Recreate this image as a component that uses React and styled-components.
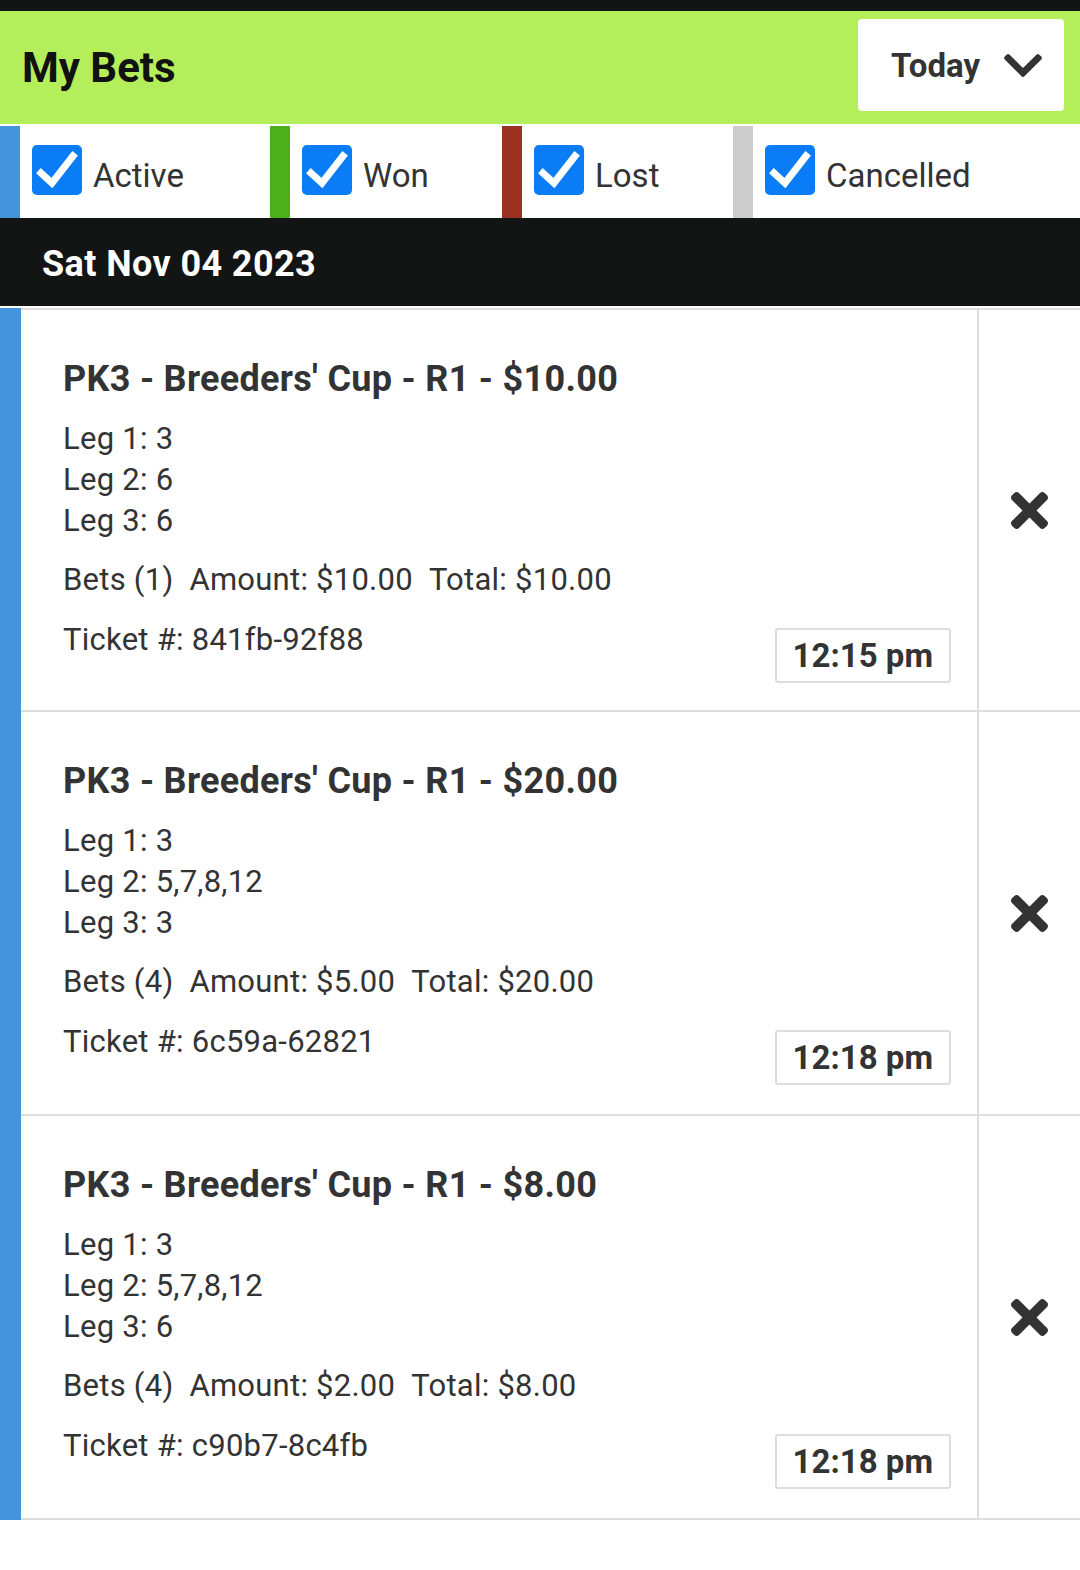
import React from 'react';
import styled, { createGlobalStyle } from 'styled-components';

const GlobalStyle = createGlobalStyle`
  html, body {
    margin: 0;
    padding: 0;
    background: #fff;
    font-family: Roboto, "Liberation Sans", Arial, sans-serif;
    color: #333;
  }
`;

const filters = [
  { label: 'Active', color: '#4494dd' },
  { label: 'Won', color: '#4cb01b' },
  { label: 'Lost', color: '#9b3322' },
  { label: 'Cancelled', color: '#cccccc' },
];

const bets = [
  {
    title: "PK3 - Breeders' Cup - R1 - $10.00",
    legs: ['3', '6', '6'],
    count: 1,
    amount: '$10.00',
    total: '$10.00',
    ticket: '841fb-92f88',
    time: '12:15 pm',
  },
  {
    title: "PK3 - Breeders' Cup - R1 - $20.00",
    legs: ['3', '5,7,8,12', '3'],
    count: 4,
    amount: '$5.00',
    total: '$20.00',
    ticket: '6c59a-62821',
    time: '12:18 pm',
  },
  {
    title: "PK3 - Breeders' Cup - R1 - $8.00",
    legs: ['3', '5,7,8,12', '6'],
    count: 4,
    amount: '$2.00',
    total: '$8.00',
    ticket: 'c90b7-8c4fb',
    time: '12:18 pm',
  },
];

const CheckIcon = () => (
  <CheckSvg width="50" height="50" viewBox="0 0 50 50">
    <rect x="0" y="0" width="50" height="50" rx="5" fill="#0a7cf5" />
    <path d="M9 28 L20 38 L41 11" fill="none" stroke="#fff" strokeWidth="7" strokeLinecap="square" />
  </CheckSvg>
);

// chunky chevron, font-awesome style
const Chevron = () => (
  <svg width="38" height="23" viewBox="5 123 438 266">
    <path
      fill="#333"
      d="M207.029 381.476L12.686 187.132c-9.373-9.373-9.373-24.569 0-33.941l22.667-22.667c9.357-9.357 24.522-9.375 33.901-.04L224 284.505l154.745-154.021c9.379-9.335 24.544-9.317 33.901.04l22.667 22.667c9.373 9.373 9.373 24.569 0 33.941L240.971 381.476c-9.373 9.372-24.569 9.372-33.942 0z"
    />
  </svg>
);

const CloseIcon = () => (
  <svg width="37" height="37" viewBox="0 80 352 352">
    <path
      fill="#333"
      d="M242.72 256l100.07-100.07c12.28-12.28 12.28-32.19 0-44.48l-22.24-22.240c-12.28-12.28-32.19-12.28-44.48 0L176 189.28 75.93 89.21c-12.28-12.28-32.19-12.28-44.48 0L9.21 111.45c-12.28 12.28-12.28 32.19 0 44.48L109.28 256 9.21 356.07c-12.28 12.28-12.28 32.19 0 44.48l22.24 22.24c12.28 12.28 32.2 12.28 44.48 0L176 322.72l100.07 100.07c12.28 12.28 32.2 12.28 44.48 0l22.24-22.24c12.28-12.28 12.28-32.19 0-44.48L242.72 256z"
    />
  </svg>
);

const App = () => {
  return (
    <Page>
      <GlobalStyle />
      <TopStrip />
      <Header>
        <Title>My Bets</Title>
        <RangeButton>
          <span>Today</span>
          <Chevron />
        </RangeButton>
      </Header>
      <FilterRow>
        {filters.map((f) => (
          <Filter key={f.label} color={f.color}>
            <CheckIcon />
            <FilterLabel>{f.label}</FilterLabel>
          </Filter>
        ))}
      </FilterRow>
      <DateBar>Sat Nov 04 2023</DateBar>
      <List>
        {bets.map((b) => (
          <Card key={b.ticket}>
            <Stripe />
            <CardMain>
              <CardBody>
                <BetTitle>{b.title}</BetTitle>
                <Legs>
                  {b.legs.map((l, i) => (
                    <div key={i}>
                      Leg {i + 1}: {l}
                    </div>
                  ))}
                </Legs>
                <Summary>
                  <span>Bets ({b.count})</span>
                  <span>Amount: {b.amount}</span>
                  <span>Total: {b.total}</span>
                </Summary>
                <Footer>
                  <span>Ticket #: {b.ticket}</span>
                  <TimeBox>{b.time}</TimeBox>
                </Footer>
              </CardBody>
              <Action>
                <CloseIcon />
              </Action>
            </CardMain>
          </Card>
        ))}
      </List>
    </Page>
  );
};

const Page = styled.div`
  width: 1080px;
  min-height: 1570px;
  background: #fff;
`;
const TopStrip = styled.div`
  height: 11px;
  background: #131515;
`;
const Header = styled.header`
  height: 113px;
  background: #b5ee5b;
  display: flex;
  align-items: center;
  justify-content: space-between;
  padding: 0 16px 0 22px;
  box-sizing: border-box;
`;
const Title = styled.h1`
  margin: 0;
  font-size: 42px;
  font-weight: 700;
  color: #111;
`;
const RangeButton = styled.div`
  width: 206px;
  height: 92px;
  margin-top: -5px;
  background: #fff;
  border-radius: 4px;
  display: flex;
  align-items: center;
  justify-content: flex-end;
  gap: 24px;
  padding-right: 22px;
  box-sizing: border-box;
  font-size: 33px;
  font-weight: 700;
  color: #333;
`;
const FilterRow = styled.div`
  display: grid;
  grid-template-columns: 270px 232px 231px 1fr;
  margin-top: 2px;
  height: 92px;
`;
const Filter = styled.label`
  display: flex;
  align-items: center;
  gap: 11px;
  padding-left: 12px;
  border-left: 20px solid ${(p) => p.color};
`;
const CheckSvg = styled.svg`
  margin-top: -4px;
  flex-shrink: 0;
`;
const FilterLabel = styled.span`
  margin-top: 6px;
  font-size: 33px;
  color: #333;
`;
const DateBar = styled.div`
  height: 88px;
  box-sizing: border-box;
  padding: 4px 0 0 42px;
  background: #131515;
  color: #fff;
  font-size: 36px;
  letter-spacing: 0.4px;
  font-weight: 700;
  display: flex;
  align-items: center;
`;
const List = styled.div`
  margin-top: 2px;
`;
const Card = styled.div`
  display: flex;
  height: 404px;
  &:first-child > div:last-child {
    border-top: 2px solid #ddd;
  }
`;
const Stripe = styled.div`
  width: 21px;
  background: #4494dd;
`;
const CardMain = styled.div`
  flex: 1;
  display: flex;
  border-bottom: 2px solid #ddd;
`;
const CardBody = styled.div`
  flex: 1;
  padding: 48px 26px 0 42px;
  font-size: 31px;
  line-height: 41px;
  letter-spacing: 0.25px;
  color: #333;
`;
const BetTitle = styled.h2`
  margin: 0 0 18px;
  font-size: 36px;
  line-height: 42px;
  letter-spacing: 0.3px;
  font-weight: 700;
  color: #333;
`;
const Legs = styled.div``;
const Summary = styled.div`
  margin-top: 18px;
  display: flex;
  gap: 16px;
`;
const Footer = styled.div`
  margin-top: 19px;
  display: flex;
  justify-content: space-between;
  align-items: flex-start;
`;
const TimeBox = styled.div`
  margin-top: 9px;
  height: 51px;
  padding: 0 16px;
  border: 2px solid #ddd;
  border-radius: 3px;
  display: flex;
  align-items: center;
  font-size: 33px;
  letter-spacing: 0;
  font-weight: 700;
`;
const Action = styled.div`
  width: 101px;
  border-left: 2px solid #ddd;
  display: flex;
  align-items: center;
  justify-content: center;
`;

export default App;
